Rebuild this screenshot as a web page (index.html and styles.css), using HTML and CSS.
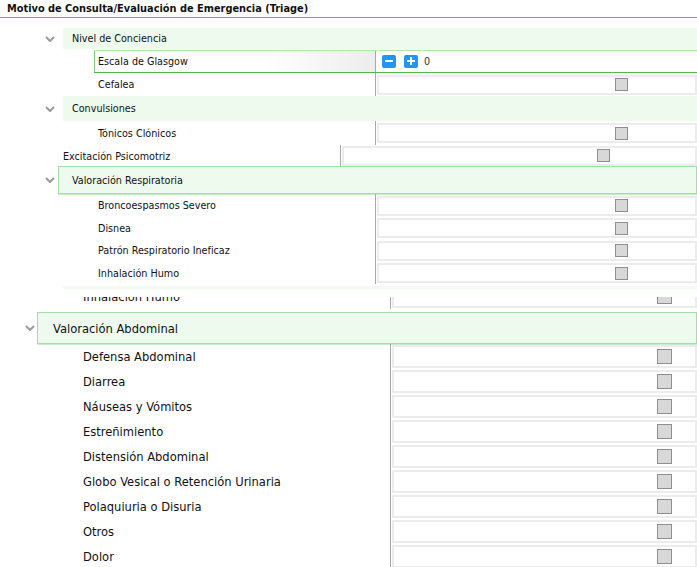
FILE: index.html
```html
<!DOCTYPE html>
<html lang="es">
<head>
    <meta charset="UTF-8">
    <title>Motivo de Consulta</title>
    <link rel="stylesheet" href="styles.css">
</head>
<body>
    <div class="title">Motivo de Consulta/Evaluación de Emergencia (Triage)</div>

    <!-- arbol superior -->
    <div class="tree tree-sm">
        <div class="group-head">
            <span class="chev"><svg width="10" height="6" viewBox="0 0 10 6"><polyline points="1,1 5,5 9,1" fill="none" stroke="#9a9a9a" stroke-width="2"/></svg></span>
            <div class="band">Nivel de Conciencia</div>
        </div>
        <div class="item item-active">
            <div class="item-label">Escala de Glasgow</div>
            <div class="item-value">
                <span class="stepper minus"></span>
                <span class="stepper plus"></span>
                <span class="count">0</span>
            </div>
        </div>
        <div class="item">
            <div class="item-label">Cefalea</div>
            <div class="item-value"><div class="field"><span class="check"></span></div></div>
        </div>

        <div class="group-head head-tall">
            <span class="chev"><svg width="10" height="6" viewBox="0 0 10 6"><polyline points="1,1 5,5 9,1" fill="none" stroke="#9a9a9a" stroke-width="2"/></svg></span>
            <div class="band">Convulsiones</div>
        </div>
        <div class="item item-h24">
            <div class="item-label">Tónicos Clónicos</div>
            <div class="item-value"><div class="field"><span class="check"></span></div></div>
        </div>

        <div class="item item-wide">
            <div class="item-label">Excitación Psicomotriz</div>
            <div class="item-value"><div class="field"><span class="check"></span></div></div>
        </div>

        <div class="group-head head-boxed">
            <span class="chev"><svg width="10" height="6" viewBox="0 0 10 6"><polyline points="1,1 5,5 9,1" fill="none" stroke="#9a9a9a" stroke-width="2"/></svg></span>
            <div class="band">Valoración Respiratoria</div>
        </div>
        <div class="item">
            <div class="item-label">Broncoespasmos Severo</div>
            <div class="item-value"><div class="field"><span class="check"></span></div></div>
        </div>
        <div class="item item-h22">
            <div class="item-label">Disnea</div>
            <div class="item-value"><div class="field"><span class="check"></span></div></div>
        </div>
        <div class="item">
            <div class="item-label">Patrón Respiratorio Ineficaz</div>
            <div class="item-value"><div class="field"><span class="check"></span></div></div>
        </div>
        <div class="item item-h22">
            <div class="item-label">Inhalación Humo</div>
            <div class="item-value"><div class="field"><span class="check"></span></div></div>
        </div>
        <div class="tail-band"></div>
    </div>

    <!-- arbol inferior -->
    <div class="tree tree-lg">
        <div class="clip">
            <div class="item">
                <div class="item-label">Inhalación Humo</div>
                <div class="item-value"><div class="field"><span class="check"></span></div></div>
            </div>
        </div>

        <div class="group-head head-boxed">
            <span class="chev"><svg width="10" height="6" viewBox="0 0 10 6"><polyline points="1,1 5,5 9,1" fill="none" stroke="#9a9a9a" stroke-width="2"/></svg></span>
            <div class="band">Valoración Abdominal</div>
        </div>
        <div class="item">
            <div class="item-label">Defensa Abdominal</div>
            <div class="item-value"><div class="field"><span class="check"></span></div></div>
        </div>
        <div class="item">
            <div class="item-label">Diarrea</div>
            <div class="item-value"><div class="field"><span class="check"></span></div></div>
        </div>
        <div class="item">
            <div class="item-label">Náuseas y Vómitos</div>
            <div class="item-value"><div class="field"><span class="check"></span></div></div>
        </div>
        <div class="item">
            <div class="item-label">Estreñimiento</div>
            <div class="item-value"><div class="field"><span class="check"></span></div></div>
        </div>
        <div class="item">
            <div class="item-label">Distensión Abdominal</div>
            <div class="item-value"><div class="field"><span class="check"></span></div></div>
        </div>
        <div class="item">
            <div class="item-label">Globo Vesical o Retención Urinaria</div>
            <div class="item-value"><div class="field"><span class="check"></span></div></div>
        </div>
        <div class="item">
            <div class="item-label">Polaquiuria o Disuria</div>
            <div class="item-value"><div class="field"><span class="check"></span></div></div>
        </div>
        <div class="item">
            <div class="item-label">Otros</div>
            <div class="item-value"><div class="field"><span class="check"></span></div></div>
        </div>
        <div class="item">
            <div class="item-label">Dolor</div>
            <div class="item-value"><div class="field"><span class="check"></span></div></div>
        </div>
    </div>
</body>
</html>
```

FILE: styles.css
```css
body {
    margin: 0;
    font-family: "DejaVu Sans Condensed", "DejaVu Sans", sans-serif;
    color: #111;
    background: #fff;
    overflow: hidden;
}
.title {
    height: 17px;
    line-height: 17px;
    padding-left: 7px;
    font-size: 10.9px;
    font-weight: bold;
    color: #111;
    border-bottom: 1px solid #62b862;
}

/* comun */
.group-head {
    display: flex;
}
.chev {
    display: flex;
    align-items: center;
}
.band {
    flex: 1;
    display: flex;
    align-items: center;
    background: #edfaed;
}
.item {
    display: flex;
}
.item-label {
    display: flex;
    align-items: center;
    box-sizing: border-box;
    white-space: nowrap;
}
.item-value {
    flex: 1;
    display: flex;
    align-items: center;
    border-left: 1px solid #a8a8a8;
    padding-left: 1px;
}
.field {
    flex: 1;
    display: flex;
    align-items: center;
    box-sizing: border-box;
    border: 2px solid #ececec;
    background: #fff;
}
.check {
    box-sizing: border-box;
    border: 1px solid #8e8e8e;
    background: #d8d8d8;
}
.head-boxed .band {
    border: 1px solid #a6dca6;
    box-shadow: 0 1px 0 #c8ebc8;
}

/* arbol superior */
.tree-sm {
    font-size: 10.7px;
    margin-top: 10px;
}
.tree-sm .group-head {
    height: 21px;
}
.tree-sm .head-tall {
    height: 25px;
}
.tree-sm .chev {
    width: 63px;
    padding-left: 45px;
    box-sizing: border-box;
}
.tree-sm .band {
    padding-left: 9px;
}
.tree-sm .item {
    height: 23px;
    margin-left: 94px;
}
.tree-sm .item-h22 {
    height: 22px;
}
.tree-sm .item-h24 {
    height: 24px;
}
.tree-sm .item-label {
    width: 281px;
    padding-left: 4px;
}
.tree-sm .field {
    height: 20px;
    padding-left: 236px;
}
.tree-sm .check {
    width: 13px;
    height: 13px;
}
.tree-sm .item-active {
    margin-top: 1px;
    box-sizing: border-box;
    border-top: 1px solid #b5e2b5;
    border-bottom: 1px solid #55b455;
}
.item-active .item-label {
    border-left: 1px solid #7fcb7f;
    padding-left: 3px;
    background: linear-gradient(to right, #fff 60%, #ededed);
}
.item-active .item-value {
    padding-left: 6px;
}
.stepper {
    position: relative;
    width: 14px;
    height: 13px;
    border-radius: 2px;
    background: #2196f3;
    margin-right: 8px;
}
.stepper::before,
.plus::after {
    content: "";
    position: absolute;
    background: #fff;
}
.stepper::before {
    left: 3px;
    top: 5px;
    width: 8px;
    height: 2px;
}
.plus::after {
    left: 6px;
    top: 2px;
    width: 2px;
    height: 8px;
}
.plus {
    margin-right: 6px;
}
.count {
    color: #333;
}
.tree-sm .item-wide {
    height: 21px;
    margin-left: 63px;
}
.item-wide .item-label {
    width: 277px;
    padding: 2px 0 0;
}
.item-wide .field {
    padding-left: 253px;
}
.tree-sm .head-boxed {
    height: 28px;
}
.tree-sm .head-boxed .chev {
    width: 58px;
}
.tree-sm .head-boxed .band {
    padding-left: 13px;
}
.tail-band {
    height: 3px;
    margin: 2px 0 8px 63px;
    background: #f1fbf1;
}

/* arbol inferior */
.tree-lg {
    font-size: 12.8px;
}
.clip {
    height: 15px;
    overflow: hidden;
}
.clip .item {
    margin-top: -13px;
}
.tree-lg .item {
    height: 25px;
}
.tree-lg .item-label {
    width: 390px;
    padding-left: 83px;
}
.tree-lg .field {
    height: 23px;
    padding-left: 263px;
}
.tree-lg .check {
    width: 15px;
    height: 15px;
}
.tree-lg .head-boxed {
    height: 32px;
}
.tree-lg .head-boxed .chev {
    width: 37px;
    padding-left: 25px;
    box-sizing: border-box;
}
.tree-lg .head-boxed .band {
    padding-left: 15px;
}
```
